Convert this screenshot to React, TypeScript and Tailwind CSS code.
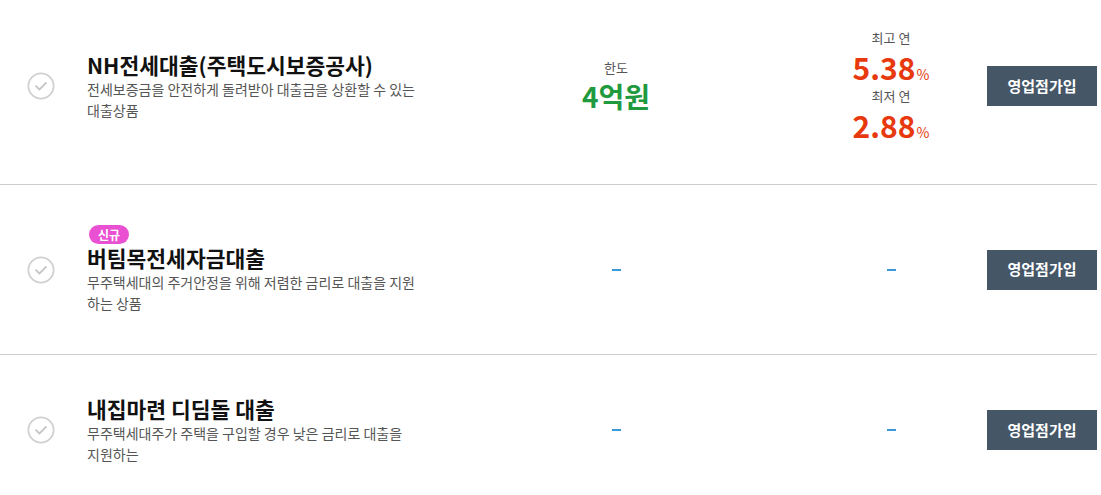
import React from 'react';

type Loan = {
  name: string;
  desc: string;
  isNew?: boolean;
  limit?: string;
  maxRate?: string;
  minRate?: string;
};

const loans: Loan[] = [
  {
    name: 'NH전세대출(주택도시보증공사)',
    desc: '전세보증금을 안전하게 돌려받아 대출금을 상환할 수 있는 대출상품',
    limit: '4억원',
    maxRate: '5.38',
    minRate: '2.88',
  },
  {
    name: '버팀목전세자금대출',
    desc: '무주택세대의 주거안정을 위해 저렴한 금리로 대출을 지원하는 상품',
    isNew: true,
  },
  {
    name: '내집마련 디딤돌 대출',
    desc: '무주택세대주가 주택을 구입할 경우 낮은 금리로 대출을 지원하는',
  },
];

function CheckCircle() {
  return (
    <svg width="28" height="28" viewBox="0 0 28 28" fill="none">
      <circle cx="14" cy="14" r="12.6" stroke="#d0d0d0" strokeWidth="1.8" />
      <path d="M9 14.2l3.4 3.3 6.6-6.6" stroke="#c6c6c6" strokeWidth="1.8" strokeLinecap="round" strokeLinejoin="round" />
    </svg>
  );
}

// 값 없음 표시
function Dash() {
  return <div className="w-[9px] h-[2px] bg-[#3a9ad9]" />;
}

function Rate({ label, value }: { label: string; value: string }) {
  return (
    <>
      <span className="text-[13px] leading-[20px] text-[#555555]">{label}</span>
      <div className="flex items-baseline h-[38px] leading-[38px] text-[#e8390e]">
        <span className="text-[30px] font-bold">{value}</span>
        <span className="text-[14px] ml-[1px]">%</span>
      </div>
    </>
  );
}

function LoanRow({ loan }: { loan: Loan }) {
  return (
    <div className="flex items-center py-[40px] border-b border-[#cccccc]">
      {/* 체크 아이콘 */}
      <div className="w-[87px] shrink-0 pl-[27px]">
        <CheckCircle />
      </div>

      {/* 상품명 / 설명 */}
      <div className="w-[350px] shrink-0 pr-[20px]">
        {loan.isNew && (
          <span className="block w-fit h-[19px] px-[9px] rounded-full bg-[#ea50d2] text-white text-[12px] font-bold leading-[19px] ml-[2px]">
            신규
          </span>
        )}
        <h3 className="text-[21.5px] font-bold leading-[28px] text-[#111111] whitespace-nowrap">{loan.name}</h3>
        <p className="text-[14px] leading-[21px] text-[#555555]">{loan.desc}</p>
      </div>

      {/* 한도 */}
      <div className="w-[358px] shrink-0 flex flex-col items-center">
        {loan.limit ? (
          <>
            <span className="text-[13px] leading-[20px] text-[#555555]">한도</span>
            <span className="text-[28px] font-bold leading-[36px] text-[#1f9a3f]">{loan.limit}</span>
          </>
        ) : (
          <Dash />
        )}
      </div>

      {/* 금리 */}
      <div className="w-[192px] shrink-0 flex flex-col items-center">
        {loan.maxRate && loan.minRate ? (
          <>
            <Rate label="최고 연" value={loan.maxRate} />
            <Rate label="최저 연" value={loan.minRate} />
          </>
        ) : (
          <Dash />
        )}
      </div>

      {/* 버튼 */}
      <button
        type="button"
        className="w-[110px] h-[40px] shrink-0 bg-[#455667] text-white text-[15px] font-bold"
      >
        영업점가입
      </button>
    </div>
  );
}

export default function App() {
  return (
    <div
      className="w-[1097px] bg-white -mt-[12px]"
      style={{ fontFamily: '"Noto Sans CJK KR", "Noto Sans", sans-serif' }}
    >
      {loans.map((loan) => (
        <LoanRow key={loan.name} loan={loan} />
      ))}
    </div>
  );
}
